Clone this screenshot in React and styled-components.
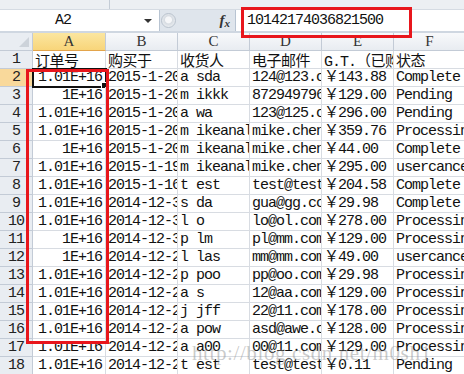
import styled, { createGlobalStyle } from "styled-components";

const GlobalStyle = createGlobalStyle`
  body {
    margin: 0;
    background: #ffffff;
    overflow: hidden;
  }
`;

const COLS = ["A", "B", "C", "D", "E", "F"];
const WIDTHS = "33px 73px 72px 72px 72px 72px 72px";

const ROWS = [
  ["订单号", "购买于", "收货人", "电子邮件", "G.T.（已购", "状态"],
  ["1.01E+16", "2015-1-20", "a sda", "124@123.com", "￥143.88", "Complete"],
  ["1E+16", "2015-1-20", "m ikkk", "872949796@", "￥129.00", "Pending"],
  ["1.01E+16", "2015-1-20", "a wa", "123@125.com", "￥296.00", "Pending"],
  ["1.01E+16", "2015-1-20", "m ikeanal", "mike.chen", "￥359.76", "Processing"],
  ["1E+16", "2015-1-20", "m ikeanal", "mike.chen", "￥44.00", "Complete"],
  ["1.01E+16", "2015-1-19", "m ikeanal", "mike.chen", "￥295.00", "usercancel"],
  ["1.01E+16", "2015-1-16", "t est", "test@test", "￥204.58", "Complete"],
  ["1.01E+16", "2014-12-31", "s da", "gua@gg.com", "￥29.98", "Complete"],
  ["1.01E+16", "2014-12-31", "l o", "lo@ol.com", "￥278.00", "Processing"],
  ["1E+16", "2014-12-31", "p lm", "pl@mm.com", "￥129.00", "Processing"],
  ["1E+16", "2014-12-21", "l las", "mm@mm.com", "￥49.00", "usercancel"],
  ["1.01E+16", "2014-12-21", "p poo", "pp@oo.com", "￥29.98", "Processing"],
  ["1.01E+16", "2014-12-21", "a s", "12@aa.com", "￥129.00", "Processing"],
  ["1.01E+16", "2014-12-21", "j jff", "22@11.com", "￥178.00", "Processing"],
  ["1.01E+16", "2014-12-21", "a pow", "asd@awe.com", "￥128.00", "Processing"],
  ["1.01E+16", "2014-12-21", "a a00", "00@11.com", "￥129.00", "Processing"],
  ["1.01E+16", "2014-12-21", "t est", "test@test", "￥0.11", "Pending"],
];

const Page = styled.div`
  position: relative;
  width: 464px;
  height: 374px;
  overflow: hidden;
  font-family: "Liberation Mono", "Noto Sans CJK SC", monospace;
`;

const TopStrip = styled.div`
  height: 9px;
  background: #eceff3;
  border-bottom: 1px solid #d5dbe3;
  display: grid;
  grid-template-columns: 110px 1fr;
  & > div:first-child {
    border-right: 1px solid #c4ccd6;
  }
`;

const FormulaBar = styled.div`
  height: 21px;
  display: flex;
  align-items: stretch;
  background: #dfe5ec;
  border-bottom: 2px solid #cfd7e1;
`;

const NameBox = styled.div`
  width: 160px;
  box-sizing: border-box;
  background: #ffffff;
  border-right: 1px solid #b8c4d2;
  display: flex;
  align-items: center;
  font-size: 15px;
  letter-spacing: -1px;
  color: #111;
  & > span {
    flex: 1;
    text-align: center;
    padding-right: 18px;
  }
`;

const DropArrow = styled.i`
  width: 0;
  height: 0;
  border-left: 4px solid transparent;
  border-right: 4px solid transparent;
  border-top: 4px solid #333;
  margin-right: 7px;
`;

const Grip = styled.div`
  width: 15px;
  height: 15px;
  margin: 3px 0 0 1px;
  border-radius: 50%;
  border: 1px solid #b9c2cd;
  background: radial-gradient(circle at 50% 45%, #f6f7f9 0 3px, #d7dce2 4px, #eef1f4 8px);
  box-sizing: border-box;
`;

const FxZone = styled.div`
  width: 60px;
  display: flex;
  align-items: center;
  justify-content: flex-end;
  padding-right: 5px;
  box-sizing: border-box;
  font-family: "Liberation Serif", serif;
  font-style: italic;
  font-weight: bold;
  font-size: 15px;
  color: #333;
  border-right: 1px solid #b8c4d2;
  & small {
    font-size: 11px;
    margin-top: 4px;
  }
`;

const FormulaInput = styled.div`
  flex: 1;
  background: #ffffff;
  display: flex;
  align-items: center;
  padding-left: 11px;
  font-size: 15px;
  letter-spacing: -1px;
  color: #111;
`;

const Sheet = styled.div`
  display: grid;
  grid-template-columns: ${WIDTHS};
  grid-auto-rows: 18px;
`;

const Corner = styled.div`
  background: #e9edf2;
  border-right: 1px solid #c3cbd6;
  border-bottom: 1px solid #c3cbd6;
  position: relative;
  &::after {
    content: "";
    position: absolute;
    right: 3px;
    bottom: 3px;
    border-left: 10px solid transparent;
    border-bottom: 10px solid #cdd3da;
  }
`;

const ColHead = styled.div`
  box-sizing: border-box;
  border-right: 1px solid #c3cbd6;
  border-bottom: 1px solid ${(p) => (p.$active ? "#e3a44b" : "#c3cbd6")};
  background: ${(p) =>
    p.$active
      ? "linear-gradient(#fbe6a0, #f8d57a)"
      : "linear-gradient(#f8f9fb, #e8ecf1)"};
  color: #333;
  font-family: "Liberation Serif", "Liberation Mono", serif;
  font-size: 15px;
  display: flex;
  align-items: center;
  justify-content: center;
`;

const RowHead = styled.div`
  box-sizing: border-box;
  border-right: 1px solid ${(p) => (p.$active ? "#e3a44b" : "#c3cbd6")};
  border-bottom: 1px solid #c3cbd6;
  background: ${(p) => (p.$active ? "#f9d99b" : "#e9edf2")};
  color: #222;
  font-size: 15px;
  letter-spacing: -1px;
  display: flex;
  align-items: flex-end;
  justify-content: center;
  line-height: 17px;
`;

const Cell = styled.div`
  box-sizing: border-box;
  position: relative;
  border-right: 1px solid #d8dce2;
  border-bottom: 1px solid #d8dce2;
  overflow: ${(p) => (p.$selected ? "visible" : "hidden")};
  white-space: nowrap;
  font-size: 15px;
  letter-spacing: -1px;
  line-height: 17px;
  color: #111;
  text-align: ${(p) => (p.$right ? "right" : "left")};
  padding: ${(p) => (p.$right ? "0 3px 0 0" : "0 0 0 2px")};
  ${(p) =>
    p.$selected &&
    `
    outline: 2px solid #111;
    outline-offset: -1px;
    &::after {
      content: "";
      position: absolute;
      right: -3px;
      bottom: -3px;
      width: 5px;
      height: 5px;
      background: #111;
      border: 1px solid #fff;
    }
  `}
`;

const Cjk = styled.span`
  font-family: "Noto Sans CJK SC", sans-serif;
  font-size: 15px;
  letter-spacing: -0.5px;
`;

const RedBox = styled.div`
  position: absolute;
  border: 3px solid #e8161c;
  pointer-events: none;
`;

const Watermark = styled.div`
  position: absolute;
  left: 192px;
  top: 341px;
  font-family: "Liberation Serif", serif;
  font-size: 21px;
  letter-spacing: 0.6px;
  color: rgba(140, 140, 140, 0.45);
  white-space: nowrap;
  pointer-events: none;
`;

const hasCjk = (s) => /[\u3000-\u9fff\uff00-\uffef]/.test(s);

const renderText = (s) => {
  if (!hasCjk(s)) return s;
  const parts = s.split(/([\u3000-\u9fff\uff01-\uffef]+)/);
  return parts.map((p, i) =>
    hasCjk(p) && !p.startsWith("￥") ? <Cjk key={i}>{p}</Cjk> : p
  );
};

export default function App() {
  return (
    <Page>
      <GlobalStyle />
      <TopStrip>
        <div />
        <div />
      </TopStrip>
      <FormulaBar>
        <NameBox>
          <span>A2</span>
          <DropArrow />
        </NameBox>
        <Grip />
        <FxZone>
          f<small>x</small>
        </FxZone>
        <FormulaInput>10142174036821500</FormulaInput>
      </FormulaBar>
      <Sheet>
        <Corner />
        {COLS.map((c) => (
          <ColHead key={c} $active={c === "A"}>
            {c}
          </ColHead>
        ))}
        {ROWS.map((row, r) => (
          <RowFragment key={r} row={row} index={r + 1} />
        ))}
      </Sheet>
      <RedBox style={{ left: 241, top: 7, width: 165, height: 25 }} />
      <RedBox style={{ left: 26, top: 69, width: 77, height: 269 }} />
      <Watermark>http://blog.csdn.net/m0sh1</Watermark>
    </Page>
  );
}

function RowFragment({ row, index }) {
  return (
    <>
      <RowHead $active={index === 2}>{index}</RowHead>
      {row.map((val, c) => (
        <Cell
          key={c}
          $right={c === 0 && index > 1}
          $selected={c === 0 && index === 2}
        >
          {renderText(val)}
        </Cell>
      ))}
    </>
  );
}
